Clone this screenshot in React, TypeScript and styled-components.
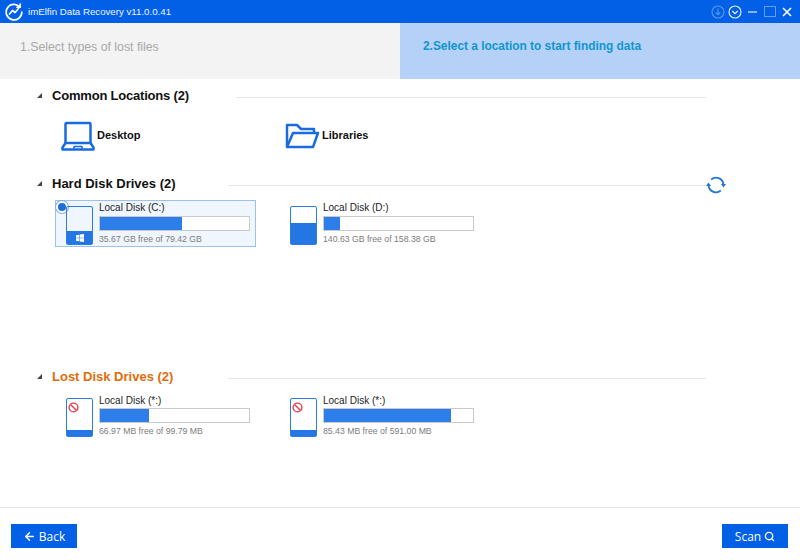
import React from "react";
import styled, { createGlobalStyle } from "styled-components";
import { Search, ArrowLeft } from "lucide-react";

const Global = createGlobalStyle`
  html, body { margin: 0; padding: 0; background: #fff; overflow: hidden; }
  body { font-family: "Liberation Sans", Arial, sans-serif; }
`;

const Page = styled.div`
  width: 800px;
  height: 560px;
  display: flex;
  flex-direction: column;
  background: #fff;
`;

const TitleBar = styled.header`
  height: 23px;
  background: #0160e6;
  display: flex;
  align-items: center;
  padding: 0 8px 0 5px;
  color: #fff;
  flex: none;
`;

const AppTitle = styled.span`
  font-size: 9.7px;
  margin-left: 5px;
  flex: 1;
  color: #eef4ff;
`;

const WindowIcons = styled.div`
  display: flex;
  align-items: center;
  gap: 6.5px;
`;

const CircleGroup = styled.div`
  display: flex;
  align-items: center;
  gap: 3px;
`;

const Steps = styled.div`
  height: 56px;
  display: flex;
  flex: none;
`;

const StepOff = styled.div`
  width: 400px;
  background: #f3f3f3;
  color: #a9a9a9;
  font-size: 12.3px;
  padding: 17px 0 0 20px;
  box-sizing: border-box;
`;

const StepOn = styled.div`
  flex: 1;
  background: #b5d1f7;
  color: #0f96d2;
  font-size: 11.9px;
  font-weight: bold;
  padding: 16px 0 0 23px;
  box-sizing: border-box;
`;

const Main = styled.main`
  flex: 1;
  display: flex;
  flex-direction: column;
  padding: 7px 0 0 37px;
  min-height: 0;
`;

const Section = styled.section<{ $height: number }>`
  height: ${(p) => p.$height}px;
  flex: none;
`;

const SectionHead = styled.div`
  height: 18px;
  display: flex;
  align-items: center;
  width: 669px;
`;

const Caret = styled.span`
  width: 0;
  height: 0;
  border-style: solid;
  border-width: 0 0 5px 5px;
  border-color: transparent transparent #444 transparent;
  margin-right: 10px;
  flex: none;
`;

const SectionTitle = styled.h2<{ $lost?: boolean; $tight?: boolean }>`
  margin: 0;
  font-size: 13px;
  font-weight: bold;
  letter-spacing: ${(p) => (p.$tight ? "-0.2px" : "0")};
  color: ${(p) => (p.$lost ? "#e36c0a" : "#111")};
  white-space: nowrap;
`;

const Rule = styled.span<{ $gap: number }>`
  flex: 1;
  height: 1px;
  background: #e6e6e6;
  margin: 4px 0 0 ${(p) => p.$gap}px;
`;

const RefreshSlot = styled.div`
  position: relative;
`;

const RefreshButton = styled.span`
  position: absolute;
  left: 669px;
  top: 1px;
  display: block;
  line-height: 0;
`;

const Locations = styled.div`
  display: flex;
  margin: 15px 0 0 24px;
`;

const Location = styled.div`
  width: 224px;
  display: flex;
  align-items: center;
  gap: 2px;
  font-size: 11px;
  font-weight: bold;
  color: #111;
  height: 33px;
`;

const LocationLabel = styled.span`
  margin-bottom: 2px;
`;

const Drives = styled.div<{ $top: number }>`
  display: flex;
  gap: 23px;
  margin: ${(p) => p.$top}px 0 0 18px;
`;

const Drive = styled.div<{ $selected?: boolean }>`
  position: relative;
  width: 201px;
  height: 47px;
  box-sizing: border-box;
  display: flex;
  padding: 5px 0 0 10px;
  border: 1px solid ${(p) => (p.$selected ? "#9dc1ef" : "transparent")};
  background: ${(p) => (p.$selected ? "#f0f6fe" : "transparent")};
`;

const Radio = styled.span`
  position: absolute;
  left: 0;
  top: 0;
  width: 8px;
  height: 8px;
  border-radius: 50%;
  background: #1d6fe0;
  border: 2px solid #fff;
  box-shadow: 0 0 0 1px #7fb0ee;
`;

const DiskIcon = styled.div`
  width: 27px;
  height: 39px;
  box-sizing: border-box;
  border: 1px solid #2d7be5;
  border-radius: 2px;
  background: transparent;
  flex: none;
  display: flex;
  flex-direction: column;
  justify-content: flex-end;
  position: relative;
`;

const DiskFill = styled.div<{ $h: number }>`
  height: ${(p) => p.$h}px;
  background: #2476e2;
  display: flex;
  align-items: center;
  justify-content: center;
`;

const DiskBadge = styled.span`
  position: absolute;
  left: 1px;
  top: 3px;
  line-height: 0;
`;

const DriveInfo = styled.div`
  margin-left: 6px;
  width: 151px;
`;

const DriveName = styled.div<{ $lost?: boolean }>`
  font-size: 10px;
  line-height: 11px;
  color: #222;
  margin-top: ${(p) => (p.$lost ? "-3px" : "-4px")};
`;

const Bar = styled.div<{ $lost?: boolean }>`
  margin-top: ${(p) => (p.$lost ? "2px" : "3px")};
  height: 15px;
  box-sizing: border-box;
  border: 1px solid #c9c9c9;
  background: #fff;
`;

const BarFill = styled.div`
  height: 100%;
  background: #2d7ee8;
`;

const DriveFree = styled.div`
  margin-top: 3px;
  font-size: 8.7px;
  line-height: 11px;
  color: #7c7c7c;
  white-space: nowrap;
`;

const Footer = styled.footer`
  height: 53px;
  flex: none;
  border-top: 1px solid #e6e6e6;
  display: flex;
  justify-content: space-between;
  align-items: flex-start;
  padding: 16px 12px 0 11px;
  box-sizing: border-box;
`;

const ActionButton = styled.button`
  width: 66px;
  height: 24px;
  border: none;
  background: #0160e6;
  color: #fff;
  font-family: "Open Sans", "Liberation Sans", sans-serif;
  font-size: 12px;
  display: flex;
  align-items: center;
  justify-content: center;
  gap: 3px;
  padding: 0;
`;

const LaptopIcon = () => (
  <svg width="34" height="30" viewBox="0 0 34 30" fill="none" stroke="#1a6be0" strokeWidth="2.5" strokeLinejoin="round">
    <path d="M4.5 22V3a1 1 0 0 1 1-1h23a1 1 0 0 1 1 1v19" />
    <path d="M4.5 22L1.5 26.5v2h31v-2L29.5 22z" />
    <path d="M13 28v-2.6h8V28" strokeWidth="1.5" />
  </svg>
);

const FolderIcon = () => (
  <svg width="35" height="26" viewBox="0 0 35 26" fill="none" stroke="#1a6be0" strokeWidth="2.5" strokeLinejoin="round">
    <path d="M2 24V2h10l4 4h13v4" />
    <path d="M2 24h26l5-14H8z" />
  </svg>
);

const RefreshIcon = () => (
  <svg width="20" height="20" viewBox="0 0 20 20" fill="none" stroke="#2576d8" strokeWidth="1.9">
    <path d="M5.2 4.4A7.5 7.5 0 0 1 17.4 9" />
    <path d="M14.8 15.6A7.5 7.5 0 0 1 2.6 11" />
    <path d="M15 9h5l-2.5 3.6z" fill="#2576d8" stroke="none" />
    <path d="M0 11h5L2.5 7.4z" fill="#2576d8" stroke="none" />
  </svg>
);

const WinLogo = () => (
  <svg width="8" height="8" viewBox="0 0 8 8" fill="#fff">
    <path d="M0 1.2l3.4-.5v3H0zM3.9.6L8 0v3.7H3.9zM0 4.2h3.4v3L0 6.8zM3.9 4.2H8V8l-4.1-.6z" />
  </svg>
);

const NoEntry = () => (
  <svg width="11" height="11" viewBox="0 0 11 11" fill="none" stroke="#ef3b52" strokeWidth="1.4">
    <circle cx="5.5" cy="5.5" r="4.4" />
    <path d="M2.5 2.5l6 6" />
  </svg>
);

const AppLogo = () => (
  <svg width="18" height="18" viewBox="0 0 18 18" fill="none" stroke="#fff" strokeWidth="1.7" strokeLinecap="round" strokeLinejoin="round">
    <path d="M14.5 3.6A7.8 7.8 0 1 0 16.8 9" />
    <path d="M15.2 1v3.2h-3.1" />
    <path d="M4.5 11l3-3.5 2.5 2 3.5-4" />
  </svg>
);

const CircleArrow = ({ dim }: { dim?: boolean }) => (
  <svg width="14" height="14" viewBox="0 0 14 14" fill="none" stroke="#fff" strokeOpacity={dim ? 0.35 : 0.9} strokeWidth="1.1">
    <circle cx="7" cy="7" r="6" />
    {dim ? <path d="M7 3.5v6M4.7 7.5L7 9.8l2.3-2.3" /> : <path d="M4.3 6L7 8.7 9.7 6" strokeWidth="1.3" />}
  </svg>
);

const MinIcon = () => (
  <svg width="9" height="10" viewBox="0 0 9 10" stroke="#fff" strokeOpacity="0.75" strokeWidth="1.4">
    <path d="M0 5h9" />
  </svg>
);

const MaxIcon = () => (
  <svg width="12" height="11" viewBox="0 0 12 11" fill="none" stroke="#fff" strokeOpacity="0.4" strokeWidth="1">
    <rect x="0.5" y="0.5" width="11" height="10" />
  </svg>
);

const CloseIcon = () => (
  <svg width="10" height="10" viewBox="0 0 10 10" stroke="#fff" strokeWidth="1.6">
    <path d="M1 1l8 8M9 1l-8 8" />
  </svg>
);

type DriveData = { name: string; free: string; pct: number; fill: number; selected?: boolean; lost?: boolean; system?: boolean };

const hard: DriveData[] = [
  { name: "Local Disk (C:)", free: "35.67 GB free of 79.42 GB", pct: 55, fill: 13, selected: true, system: true },
  { name: "Local Disk (D:)", free: "140.63 GB free of 158.38 GB", pct: 10.5, fill: 21 },
];
const lost: DriveData[] = [
  { name: "Local Disk (*:)", free: "66.97 MB free of 99.79 MB", pct: 33, fill: 6, lost: true },
  { name: "Local Disk (*:)", free: "85.43 MB free of 591.00 MB", pct: 85.5, fill: 6, lost: true },
];

const DriveCard = ({ d }: { d: DriveData }) => (
  <Drive $selected={d.selected}>
    {d.selected && <Radio />}
    <DiskIcon>
      {d.lost && (
        <DiskBadge>
          <NoEntry />
        </DiskBadge>
      )}
      <DiskFill $h={d.fill}>{d.system && <WinLogo />}</DiskFill>
    </DiskIcon>
    <DriveInfo>
      <DriveName $lost={d.lost}>{d.name}</DriveName>
      <Bar $lost={d.lost}>
        <BarFill style={{ width: `${d.pct}%` }} />
      </Bar>
      <DriveFree>{d.free}</DriveFree>
    </DriveInfo>
  </Drive>
);

export default function App() {
  return (
    <Page>
      <Global />
      <TitleBar>
        <AppLogo />
        <AppTitle>imElfin Data Recovery v11.0.0.41</AppTitle>
        <WindowIcons>
          <CircleGroup>
            <CircleArrow dim />
            <CircleArrow />
          </CircleGroup>
          <MinIcon />
          <MaxIcon />
          <CloseIcon />
        </WindowIcons>
      </TitleBar>
      <Steps>
        <StepOff>1.Select types of lost files</StepOff>
        <StepOn>2.Select a location to start finding data</StepOn>
      </Steps>
      <Main>
        <Section $height={88}>
          <SectionHead>
            <Caret />
            <SectionTitle $tight>Common Locations (2)</SectionTitle>
            <Rule $gap={47} />
          </SectionHead>
          <Locations>
            <Location>
              <LaptopIcon />
              <LocationLabel>Desktop</LocationLabel>
            </Location>
            <Location>
              <FolderIcon />
              <LocationLabel>Libraries</LocationLabel>
            </Location>
          </Locations>
        </Section>
        <Section $height={193}>
          <RefreshSlot>
            <RefreshButton>
              <RefreshIcon />
            </RefreshButton>
          </RefreshSlot>
          <SectionHead>
            <Caret />
            <SectionTitle>Hard Disk Drives (2)</SectionTitle>
            <Rule $gap={52} />
          </SectionHead>
          <Drives $top={8}>
            {hard.map((d) => (
              <DriveCard key={d.name} d={d} />
            ))}
          </Drives>
        </Section>
        <Section $height={140}>
          <SectionHead>
            <Caret />
            <SectionTitle $lost>Lost Disk Drives (2)</SectionTitle>
            <Rule $gap={55} />
          </SectionHead>
          <Drives $top={7}>
            {lost.map((d) => (
              <DriveCard key={d.free} d={d} />
            ))}
          </Drives>
        </Section>
      </Main>
      <Footer>
        <ActionButton>
          <ArrowLeft size={13} strokeWidth={2.6} />
          Back
        </ActionButton>
        <ActionButton>
          Scan
          <Search size={11} strokeWidth={3} />
        </ActionButton>
      </Footer>
    </Page>
  );
}
